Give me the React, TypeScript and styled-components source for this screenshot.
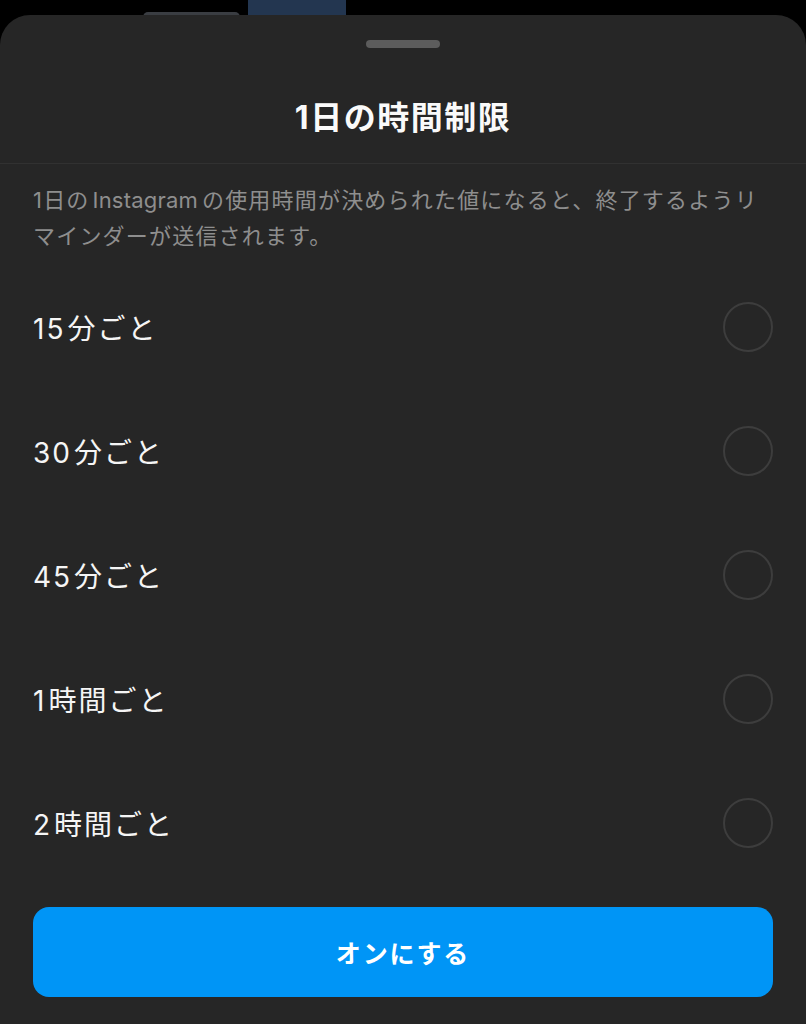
import styled, { createGlobalStyle } from 'styled-components';

const GlobalStyle = createGlobalStyle`
    html, body {
        margin: 0;
        padding: 0;
        background: #000;
    }
    body {
        font-family: "Inter", "Noto Sans CJK JP", sans-serif;
        -webkit-font-smoothing: antialiased;
    }
`;

const Backdrop = styled.div`
    width: 806px;
    height: 1024px;
    overflow: hidden;
    position: relative;
    background: #000;
`;

const PeekGray = styled.div`
    position: absolute;
    left: 143px;
    top: 12px;
    width: 97px;
    height: 10px;
    border-radius: 6px;
    background: #3a3d42;
`;

const PeekBlue = styled.div`
    position: absolute;
    left: 248px;
    top: 0;
    width: 98px;
    height: 20px;
    background: #233650;
`;

const Sheet = styled.div`
    position: relative;
    margin-top: 15px;
    height: 1009px;
    background: #262626;
    border-radius: 30px 30px 0 0;
    display: flex;
    flex-direction: column;
`;

const HandleWrap = styled.div`
    display: flex;
    justify-content: center;
    padding-top: 25px;
`;

const Handle = styled.div`
    width: 74px;
    height: 8px;
    border-radius: 4px;
    background: #5c5c5c;
`;

const Header = styled.div`
    padding: 50px 0 25px;
    border-bottom: 1px solid #313131;
    text-align: center;
`;

const Title = styled.h1`
    margin: 0;
    font-size: 32px;
    line-height: 40px;
    font-weight: 700;
    color: #fafafa;
    letter-spacing: 1.5px;
`;

const Description = styled.p`
    margin: 0;
    padding: 18px 33px 0;
    font-size: 22px;
    line-height: 36px;
    color: #8e8e8e;
    letter-spacing: 1.2px;
`;

const Latin = styled.span`
    margin: 0 4px 0 3px;
    letter-spacing: 0.2px;
`;

const OptionList = styled.div`
    margin-top: 11px;
    display: flex;
    flex-direction: column;
`;

const OptionRow = styled.label`
    height: 124px;
    padding: 0 33px;
    display: flex;
    align-items: center;
    justify-content: space-between;
    cursor: pointer;
`;

const OptionLabel = styled.span`
    font-size: 28px;
    color: #f5f5f5;
    letter-spacing: 2px;
`;

const Num = styled.span`
    margin-right: 2px;
`;

const Radio = styled.span<{ $checked?: boolean }>`
    width: 50px;
    height: 50px;
    box-sizing: border-box;
    border-radius: 50%;
    border: 2px solid ${(p) => (p.$checked ? '#0095f6' : '#3d3d3d')};
`;

const Footer = styled.div`
    padding: 22px 33px 0;
`;

const PrimaryButton = styled.button`
    width: 100%;
    height: 90px;
    border: none;
    border-radius: 16px;
    background: #0095f6;
    color: #fff;
    font-family: inherit;
    font-size: 25px;
    font-weight: 700;
    letter-spacing: 1.8px;
    cursor: pointer;
`;

const options = [
    { num: '15', unit: '分ごと' },
    { num: '30', unit: '分ごと' },
    { num: '45', unit: '分ごと' },
    { num: '1', unit: '時間ごと' },
    { num: '2', unit: '時間ごと' },
];

const App = () => {
    return (
        <>
            <GlobalStyle />
            <Backdrop>
                <PeekGray />
                <PeekBlue />
                <Sheet>
                    <HandleWrap>
                        <Handle />
                    </HandleWrap>
                    <Header>
                        <Title>1日の時間制限</Title>
                    </Header>
                    <Description>
                        1日の<Latin>Instagram</Latin>の使用時間が決められた値になると、終了するようリマインダーが送信されます。
                    </Description>
                    <OptionList>
                        {options.map((o) => (
                            <OptionRow key={o.num + o.unit}>
                                <OptionLabel>
                                    <Num>{o.num}</Num>
                                    {o.unit}
                                </OptionLabel>
                                <Radio />
                            </OptionRow>
                        ))}
                    </OptionList>
                    <Footer>
                        <PrimaryButton>オンにする</PrimaryButton>
                    </Footer>
                </Sheet>
            </Backdrop>
        </>
    );
};

export default App;
